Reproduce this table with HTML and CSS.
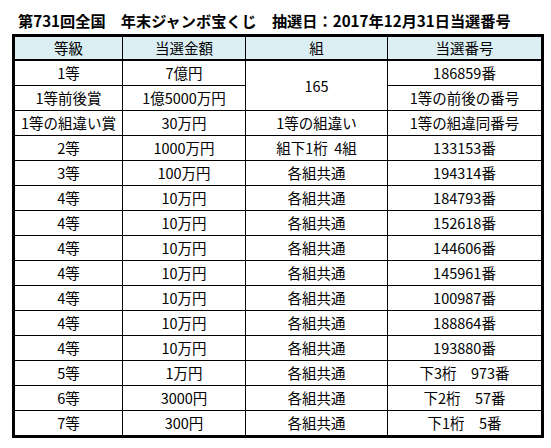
FILE: index.html
```html
<!DOCTYPE html>
<html lang="ja">
<head>
<meta charset="utf-8">
<link rel="stylesheet" href="styles.css">
</head>
<body>
<div class="page">
  <h1 class="title">第731回全国　年末ジャンボ宝くじ　抽選日：2017年12月31日当選番号</h1>
  <table class="result">
    <colgroup>
      <col class="c1"><col class="c2"><col class="c3"><col class="c4">
    </colgroup>
    <thead>
      <tr><th>等級</th><th>当選金額</th><th>組</th><th>当選番号</th></tr>
    </thead>
    <tbody>
      <tr><td>1等</td><td>7億円</td><td rowspan="2">165</td><td>186859番</td></tr>
      <tr><td>1等前後賞</td><td>1億5000万円</td><td>1等の前後の番号</td></tr>
      <tr><td>1等の組違い賞</td><td>30万円</td><td>1等の組違い</td><td>1等の組違同番号</td></tr>
      <tr><td>2等</td><td>1000万円</td><td>組下1桁&nbsp; 4組</td><td>133153番</td></tr>
      <tr><td>3等</td><td>100万円</td><td>各組共通</td><td>194314番</td></tr>
      <tr><td>4等</td><td>10万円</td><td>各組共通</td><td>184793番</td></tr>
      <tr><td>4等</td><td>10万円</td><td>各組共通</td><td>152618番</td></tr>
      <tr><td>4等</td><td>10万円</td><td>各組共通</td><td>144606番</td></tr>
      <tr><td>4等</td><td>10万円</td><td>各組共通</td><td>145961番</td></tr>
      <tr><td>4等</td><td>10万円</td><td>各組共通</td><td>100987番</td></tr>
      <tr><td>4等</td><td>10万円</td><td>各組共通</td><td>188864番</td></tr>
      <tr><td>4等</td><td>10万円</td><td>各組共通</td><td>193880番</td></tr>
      <tr><td>5等</td><td>1万円</td><td>各組共通</td><td>下3桁　973番</td></tr>
      <tr><td>6等</td><td>3000円</td><td>各組共通</td><td>下2桁　57番</td></tr>
      <tr><td>7等</td><td>300円</td><td>各組共通</td><td>下1桁　5番</td></tr>
    </tbody>
  </table>
</div>
</body>
</html>
```
FILE: styles.css
```css
html, body {
  margin: 0;
  padding: 0;
  background: #ffffff;
}
.page {
  padding: 10px 0 0 12px;
  font-family: "Noto Sans CJK JP", "Noto Sans", sans-serif;
  color: #000;
}
.title {
  margin: 0 0 4px 6px;
  font-size: 15.2px;
  line-height: 20px;
  font-weight: bold;
  white-space: nowrap;
}
.result {
  border-collapse: collapse;
  table-layout: fixed;
  width: 532px;
  border: 3px solid #000;
  font-size: 14.5px;
}
.c1 { width: 109px; }
.c2 { width: 123px; }
.c3 { width: 142px; }
.c4 { width: 155px; }
.result th,
.result td {
  border: 1px solid #000;
  padding: 0;
  height: 24px;
  line-height: 20px;
  text-align: center;
  font-weight: normal;
  white-space: nowrap;
}
.result th {
  height: 22px;
  background: #daeef3;
  border-bottom: 2px solid #000;
}
```
